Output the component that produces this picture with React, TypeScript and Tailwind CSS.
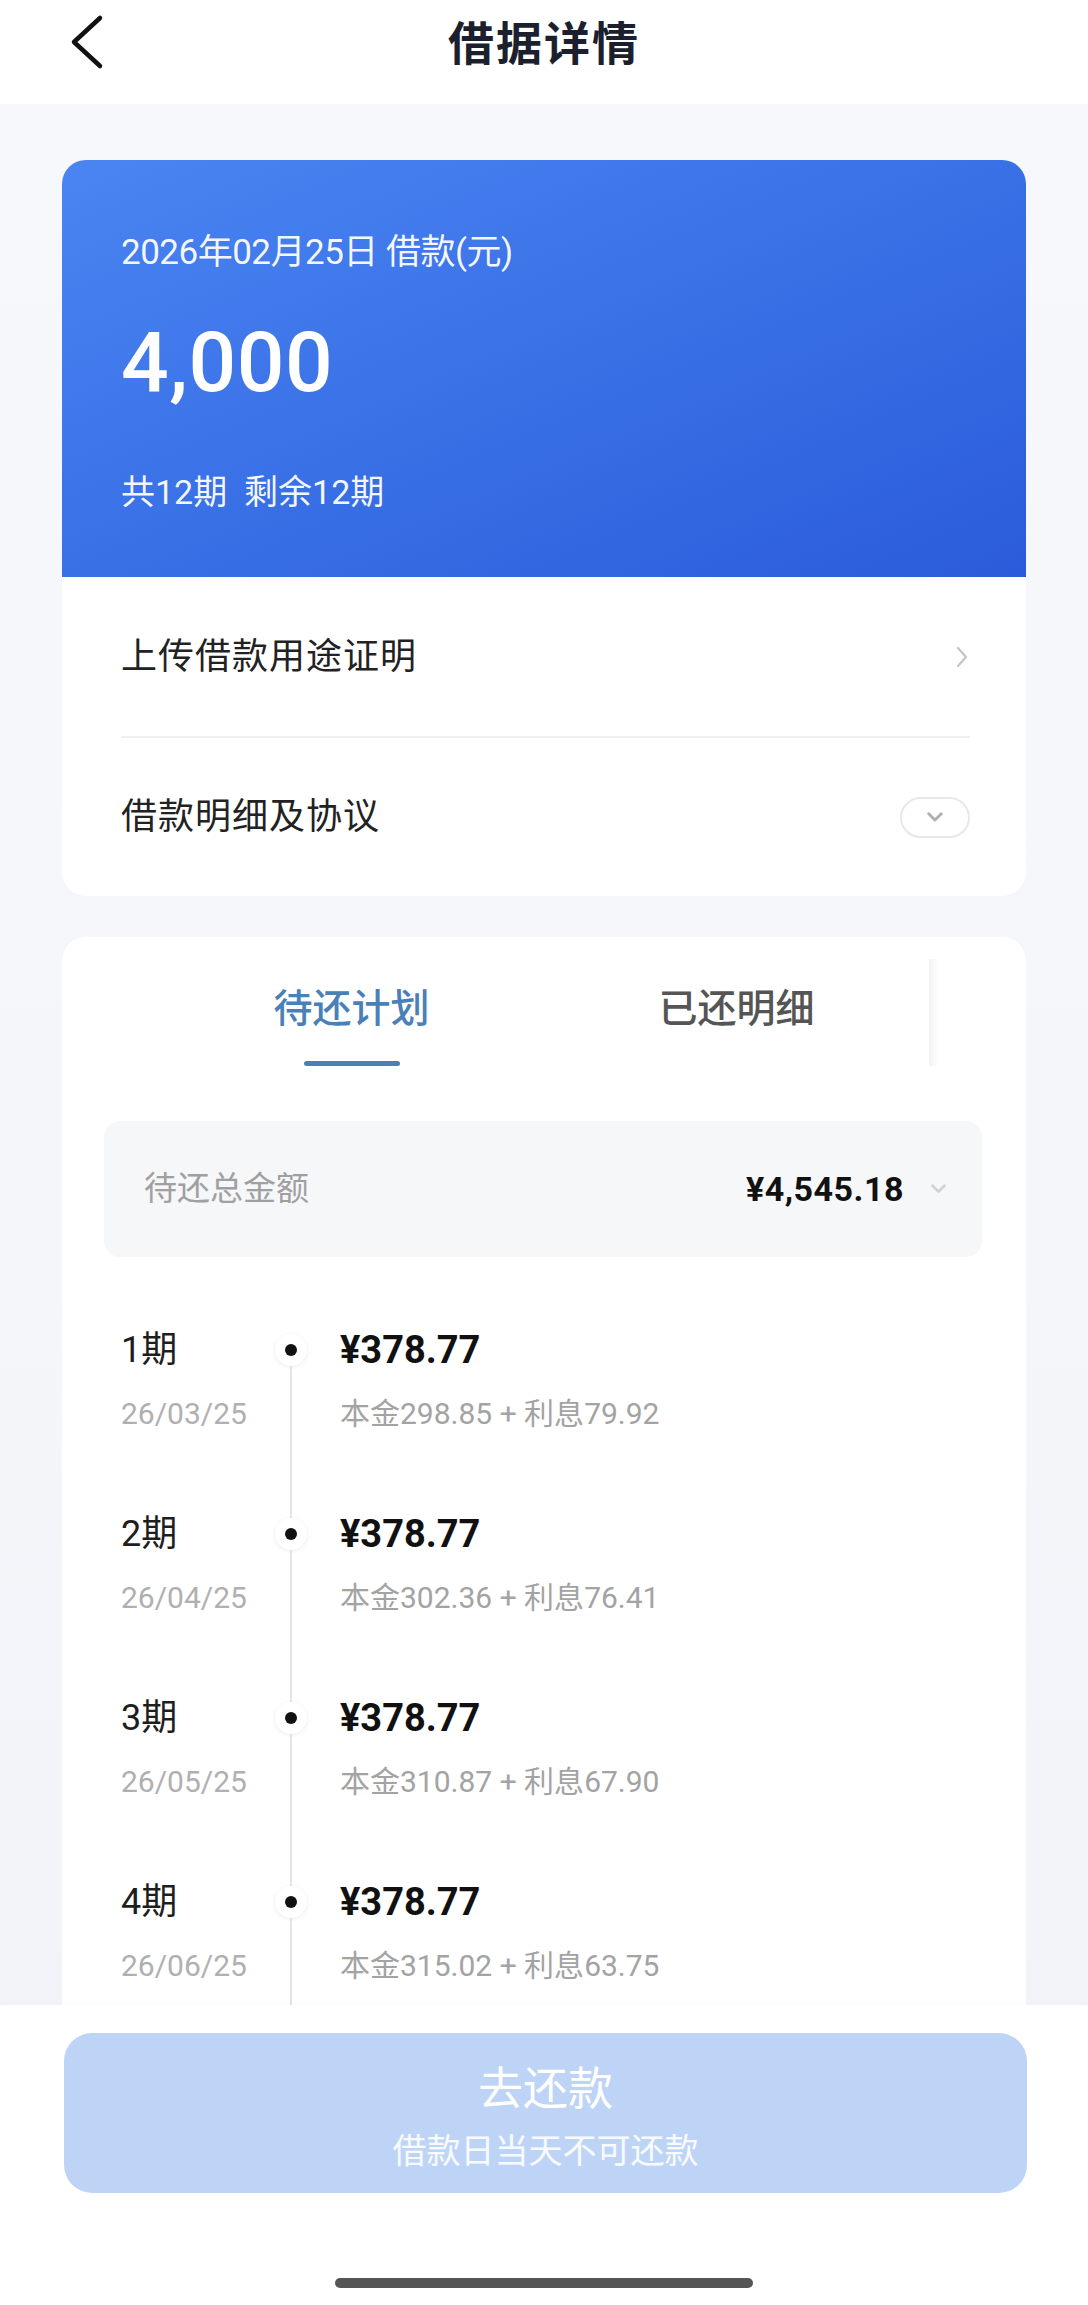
import React from 'react';

const PLAN = [
  { period: '1期', date: '26/03/25', amount: '¥378.77', principal: '298.85', interest: '79.92' },
  { period: '2期', date: '26/04/25', amount: '¥378.77', principal: '302.36', interest: '76.41' },
  { period: '3期', date: '26/05/25', amount: '¥378.77', principal: '310.87', interest: '67.90' },
  { period: '4期', date: '26/06/25', amount: '¥378.77', principal: '315.02', interest: '63.75' },
];

const BackIcon = () => (
  <svg width="36" height="56" viewBox="0 0 36 56" fill="none">
    <polyline points="30,4 4,28 30,52" stroke="#111" strokeWidth="4.5" strokeLinecap="round" strokeLinejoin="round" />
  </svg>
);

const ChevronRight = () => (
  <svg width="16" height="24" viewBox="0 0 16 24" fill="none">
    <polyline points="4,3 12,12 4,21" stroke="#c4c4c4" strokeWidth="2.2" strokeLinecap="round" strokeLinejoin="round" />
  </svg>
);

const ChevronDown = ({ color = '#b5b5b5', w = 18 }: { color?: string; w?: number }) => (
  <svg width={w} height={w * 0.6} viewBox="0 0 20 12" fill="none">
    <polyline points="3,2 10,9 17,2" stroke={color} strokeWidth="3.2" strokeLinecap="round" strokeLinejoin="round" />
  </svg>
);

export default function App() {
  return (
    <div className="w-[1088px] h-[2305px] flex flex-col overflow-hidden bg-[#f4f6fa] font-[family-name:Roboto,'Noto_Sans_CJK_SC',sans-serif]">
      {/* Nav bar */}
      <div className="h-[104px] shrink-0 bg-white">
        <div className="relative h-[88px] flex items-center justify-center">
          <div className="absolute left-[70px] top-[14px]">
            <BackIcon />
          </div>
          <h1 className="text-[46px] leading-[56px] font-bold text-[#1b1f2e] tracking-[2px]">借据详情</h1>
        </div>
      </div>

      {/* Scroll area */}
      <div className="flex-1 overflow-hidden px-[62px] pt-[56px] bg-linear-to-b from-[#f7f8fb] to-[#f2f4f9]">
        {/* Loan card */}
        <div className="rounded-[24px] overflow-hidden bg-white">
          <div className="h-[417px] bg-linear-to-br from-[#4a85f2] to-[#2b5bda] pl-[59px] pt-[69px] text-white">
            <div className="text-[35px] leading-[48px] text-white/95 tracking-[-0.5px]">2026年02月25日 借款(元)</div>
            <div className="mt-[36px] text-[84px] leading-[100px] font-medium tracking-[0.5px]">4,000</div>
            <div className="mt-[55px] text-[34px] leading-[48px] text-white/95">共12期&nbsp;&nbsp;剩余12期</div>
          </div>
          <div className="ml-[59px] mr-[56px]">
            <div className="h-[161px] flex items-center justify-between border-b-2 border-[#efefef]">
              <span className="text-[36px] text-[#222] tracking-[1px]">上传借款用途证明</span>
              <ChevronRight />
            </div>
            <div className="h-[158px] flex items-center justify-between">
              <span className="text-[36px] text-[#222] tracking-[1px]">借款明细及协议</span>
              <div className="w-[70px] h-[41px] rounded-full border-2 border-[#e8e8e8] flex items-center justify-center">
                <ChevronDown color="#b0b0b0" w={18} />
              </div>
            </div>
          </div>
        </div>

        {/* Plan card */}
        <div className="mt-[41px] rounded-[24px] bg-white pb-[60px]">
          <div className="flex pl-[97px] pt-[46px]">
            <div className="w-[385px] flex flex-col items-center">
              <span className="text-[39px] leading-[52px] font-medium text-[#4a80b8]">待还计划</span>
              <div className="mt-[26px] w-[96px] h-[5px] rounded-full bg-[#4a80b8]" />
            </div>
            <div className="w-[385px] flex flex-col items-center">
              <span className="text-[39px] leading-[52px] font-medium text-[#555]">已还明细</span>
            </div>
            <div className="w-[10px] self-stretch -mt-[24px] bg-linear-to-r from-[#f3f3f3] to-white/0" />
          </div>

          {/* Summary */}
          <div className="mt-[55px] ml-[42px] w-[878px] h-[136px] rounded-[16px] bg-[#f6f7f9] flex items-center pl-[40px] pr-[35px]">
            <span className="text-[33px] text-[#a0a0a0]">待还总金额</span>
            <span className="ml-auto text-[34px] font-bold text-[#111] tracking-[0.5px]">¥4,545.18</span>
            <span className="ml-[26px]">
              <ChevronDown color="#d2d2d2" w={17} />
            </span>
          </div>

          {/* Timeline */}
          <div className="mt-[63px] pl-[59px]">
            {PLAN.map((row, i) => (
              <div key={row.period} className={`flex ${i === PLAN.length - 1 ? 'h-[240px]' : 'h-[184px]'}`}>
                <div className="w-[154px] flex flex-col">
                  <div className="h-[60px] flex items-center text-[36px] text-[#1e1e1e]">{row.period}</div>
                  <div className="mt-[10px] h-[46px] flex items-center text-[30px] text-[#b0b0b0]">{row.date}</div>
                </div>
                <div className="w-[32px] flex flex-col items-center">
                  <div className={`w-[2px] h-[14px] ${i === 0 ? 'bg-transparent' : 'bg-[#e4e4e4]'}`} />
                  <div className="w-[32px] h-[32px] rounded-full bg-white shadow-[0_1px_4px_rgba(0,0,0,0.08)] flex items-center justify-center">
                    <div className="w-[12px] h-[12px] rounded-full bg-[#111]" />
                  </div>
                  <div className="w-[2px] flex-1 bg-[#e4e4e4]" />
                </div>
                <div className="ml-[33px] flex flex-col">
                  <div className="h-[60px] flex items-center text-[38px] font-bold text-[#111]">{row.amount}</div>
                  <div className="mt-[10px] h-[46px] flex items-center text-[30px] text-[#a3a3a3]">
                    本金{row.principal} + 利息{row.interest}
                  </div>
                </div>
              </div>
            ))}
          </div>
        </div>
      </div>

      {/* Footer */}
      <div className="h-[300px] shrink-0 bg-white flex flex-col shadow-[0_-2px_8px_rgba(0,0,0,0.02)]">
        <div className="mt-[28px] ml-[64px] w-[963px] h-[160px] rounded-[28px] bg-[#bed4f7] flex flex-col items-center pt-[30px]">
          <span className="text-[45px] leading-[54px] text-white">去还款</span>
          <span className="mt-[14px] text-[34px] leading-[40px] text-white/90">借款日当天不可还款</span>
        </div>
        <div className="mt-[85px] mx-auto w-[418px] h-[10px] rounded-full bg-[#555]" />
      </div>
    </div>
  );
}
